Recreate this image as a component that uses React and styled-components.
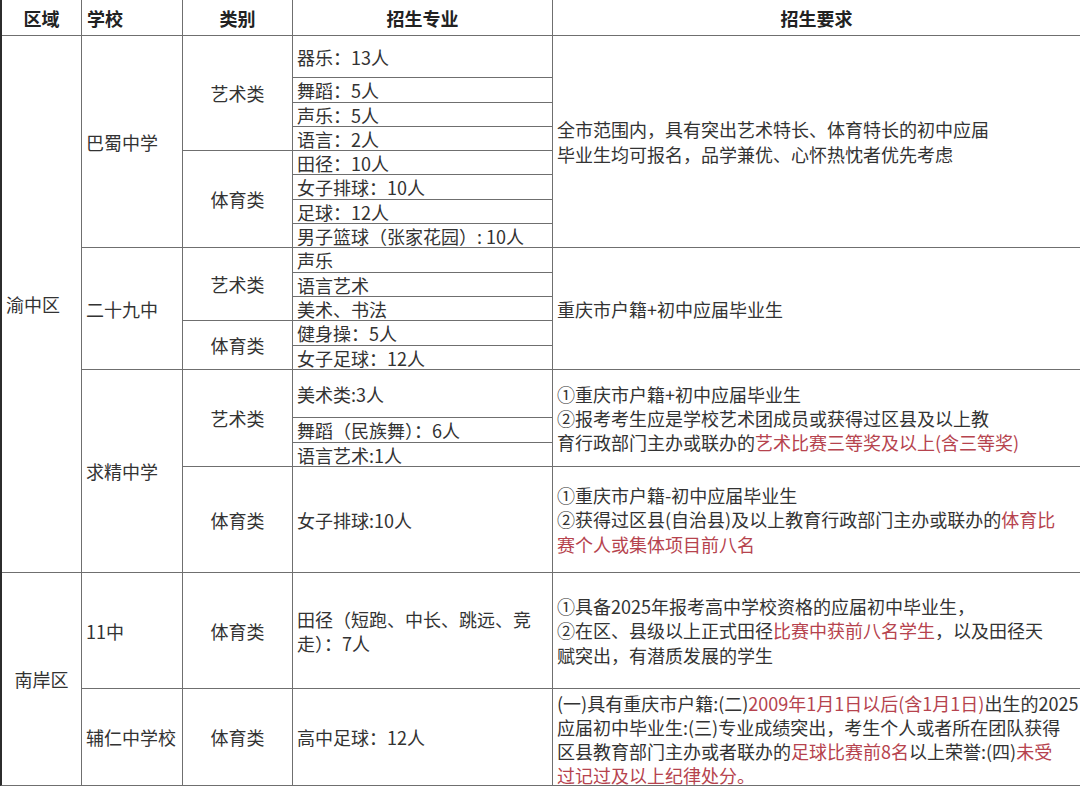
import styled, { createGlobalStyle } from "styled-components";

const GlobalStyle = createGlobalStyle`
  html, body {
    margin: 0;
    padding: 0;
    background: #fff;
  }
  body {
    width: 1080px;
    height: 786px;
    overflow: hidden;
    font-family: "Noto Sans CJK SC", "Noto Sans", sans-serif;
    color: #333;
  }
`;

const Sheet = styled.div`
  display: grid;
  grid-template-columns: 79px 100px 109px 259px 527px;
  grid-template-rows:
    35px 41px 24px 23px 23px 23px 24px 23px 23px
    24px 23px 23px 24px 23px
    47px 24px 23px 105px
    115px 96px;
  gap: 1px;
  width: max-content;
  background: #6f6f6f;
  border-left: 2px solid #2c2c2c;
  border-bottom: 1px solid #6f6f6f;
`;

const HeadCell = styled.div`
  display: flex;
  align-items: center;
  justify-content: ${(props) => (props.$align === "left" ? "flex-start" : "center")};
  padding: 0 5px;
  background: #fff;
  font-size: 18px;
  font-weight: 700;
  color: #222;
`;

const Cell = styled.div`
  grid-row: span ${(props) => props.$rows || 1};
  display: flex;
  flex-direction: column;
  justify-content: ${(props) => (props.$top ? "flex-start" : "center")};
  align-items: ${(props) => (props.$align === "center" ? "center" : "flex-start")};
  padding: ${(props) => (props.$top ? "2px 4px 0" : "0 4px")};
  background: #fff;
  font-size: 18px;
  line-height: ${(props) => props.$lh || 24}px;
  white-space: nowrap;
  overflow: ${(props) => (props.$top ? "visible" : "hidden")};
`;

const Line = styled.span`
  display: block;
`;

const Hot = styled.span`
  color: #b6434e;
`;

const App = () => {
  return (
    <>
      <GlobalStyle />
      <Sheet>
        <HeadCell>区域</HeadCell>
        <HeadCell $align="left">学校</HeadCell>
        <HeadCell>类别</HeadCell>
        <HeadCell>招生专业</HeadCell>
        <HeadCell>招生要求</HeadCell>

        {/* 渝中区 / 巴蜀中学 */}
        <Cell $rows={17}>渝中区</Cell>
        <Cell $rows={8}>巴蜀中学</Cell>
        <Cell $rows={4} $align="center">艺术类</Cell>
        <Cell>器乐：13人</Cell>
        <Cell $rows={8} $lh={25}>
          <Line>全市范围内，具有突出艺术特长、体育特长的初中应届</Line>
          <Line>毕业生均可报名，品学兼优、心怀热忱者优先考虑</Line>
        </Cell>
        <Cell>舞蹈：5人</Cell>
        <Cell>声乐：5人</Cell>
        <Cell>语言：2人</Cell>
        <Cell $rows={4} $align="center">体育类</Cell>
        <Cell>田径：10人</Cell>
        <Cell>女子排球：10人</Cell>
        <Cell>足球：12人</Cell>
        <Cell>男子篮球（张家花园）: 10人</Cell>

        {/* 二十九中 */}
        <Cell $rows={5}>二十九中</Cell>
        <Cell $rows={3} $align="center">艺术类</Cell>
        <Cell>声乐</Cell>
        <Cell $rows={5}>重庆市户籍+初中应届毕业生</Cell>
        <Cell>语言艺术</Cell>
        <Cell>美术、书法</Cell>
        <Cell $rows={2} $align="center">体育类</Cell>
        <Cell>健身操：5人</Cell>
        <Cell>女子足球：12人</Cell>

        {/* 求精中学 */}
        <Cell $rows={4}>求精中学</Cell>
        <Cell $rows={3} $align="center">艺术类</Cell>
        <Cell>美术类:3人</Cell>
        <Cell $rows={3}>
          <Line>①重庆市户籍+初中应届毕业生</Line>
          <Line>②报考考生应是学校艺术团成员或获得过区县及以上教</Line>
          <Line>
            育行政部门主办或联办的<Hot>艺术比赛三等奖及以上(含三等奖)</Hot>
          </Line>
        </Cell>
        <Cell>舞蹈（民族舞）：6人</Cell>
        <Cell>语言艺术:1人</Cell>
        <Cell $align="center">体育类</Cell>
        <Cell>女子排球:10人</Cell>
        <Cell $lh={24.5}>
          <Line>①重庆市户籍-初中应届毕业生</Line>
          <Line>
            ②获得过区县(自治县)及以上教育行政部门主办或联办的<Hot>体育比</Hot>
          </Line>
          <Line>
            <Hot>赛个人或集体项目前八名</Hot>
          </Line>
        </Cell>

        {/* 南岸区 */}
        <Cell $rows={2} $align="center">南岸区</Cell>
        <Cell>11中</Cell>
        <Cell $align="center">体育类</Cell>
        <Cell>
          <Line>田径（短跑、中长、跳远、竞</Line>
          <Line>走）：7人</Line>
        </Cell>
        <Cell $lh={24.5}>
          <Line>①具备2025年报考高中学校资格的应届初中毕业生，</Line>
          <Line>
            ②在区、县级以上正式田径<Hot>比赛中获前八名学生</Hot>，以及田径天
          </Line>
          <Line>赋突出，有潜质发展的学生</Line>
        </Cell>
        <Cell>辅仁中学校</Cell>
        <Cell $align="center">体育类</Cell>
        <Cell>高中足球：12人</Cell>
        <Cell $top>
          <Line>
            (一)具有重庆市户籍:(二)<Hot>2009年1月1日以后(含1月1日)</Hot>出生的2025
          </Line>
          <Line>应届初中毕业生:(三)专业成绩突出，考生个人或者所在团队获得</Line>
          <Line>
            区县教育部门主办或者联办的<Hot>足球比赛前8名</Hot>以上荣誉:(四)<Hot>未受</Hot>
          </Line>
          <Line>
            <Hot>过记过及以上纪律处分。</Hot>
          </Line>
        </Cell>
      </Sheet>
    </>
  );
};

export default App;
